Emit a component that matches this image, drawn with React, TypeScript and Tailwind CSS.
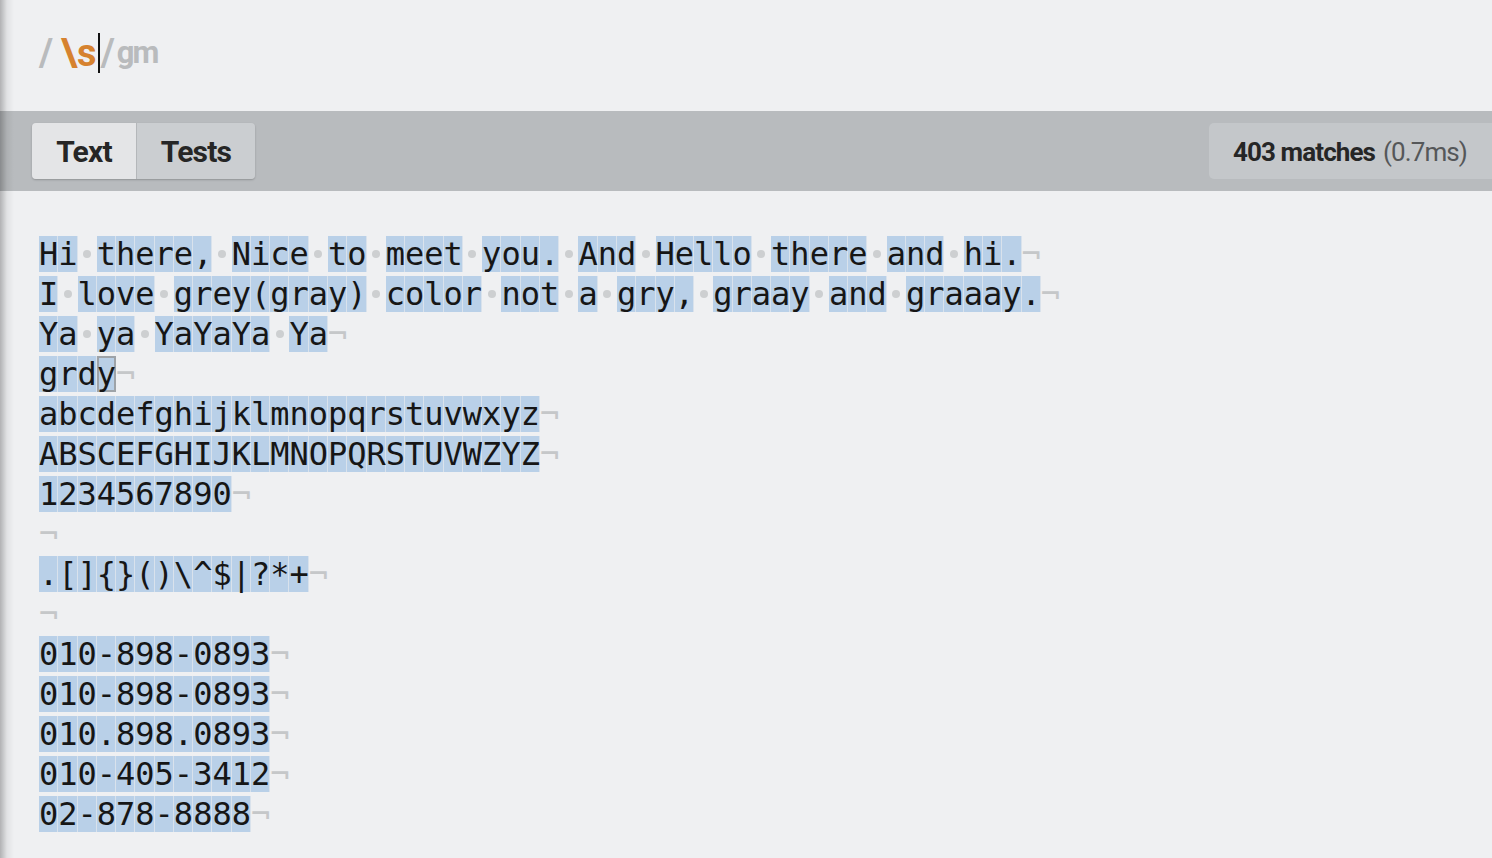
const LINES = [
  "Hi there, Nice to meet you. And Hello there and hi.",
  "I love grey(gray) color not a gry, graay and graaay.",
  "Ya ya YaYaYa Ya",
  "grdy",
  "abcdefghijklmnopqrstuvwxyz",
  "ABSCEFGHIJKLMNOPQRSTUVWZYZ",
  "1234567890",
  "",
  ".[]{}()\\^$|?*+",
  "",
  "010-898-0893",
  "010-898-0893",
  "010.898.0893",
  "010-405-3412",
  "02-878-8888",
];

function Line({ text, row }: { text: string; row: number }) {
  return (
    <div className="flex h-10 items-center">
      {text.split("").map((ch, i) =>
        ch === " " ? (
          <span key={i} className="flex h-9 w-[1ch] items-center justify-center">
            <span className="h-[8px] w-[8px] rounded-full bg-[#cdcfd1]" />
          </span>
        ) : (
          <span
            key={i}
            className={
              row === 3 && i === 3
                ? "h-9 bg-[#b9cfe6] leading-9 shadow-[inset_0_0_0_2px_#9ea3a8]"
                : "h-9 bg-[#b9d0e8] leading-9 shadow-[inset_-1px_0_0_#d9e2ec]"
            }
          >
            {ch}
          </span>
        )
      )}
      <span className="h-9 leading-9 text-[#c5c7c9]">¬</span>
    </div>
  );
}

export default function App() {
  return (
    <div className="relative h-[858px] w-full overflow-hidden bg-[#eff0f2] font-['Roboto',sans-serif]">
      <div className="flex h-[111px] items-center pb-[6px] pl-[39px] text-[38px] font-bold leading-none">
        <span className="text-[#b9bbbd]">/</span>
        <span className="ml-[8px] text-[#d6822f]">\s</span>
        <span className="mx-[1px] inline-block h-10 w-[2px] bg-[#111]" />
        <span className="text-[#b9bbbd]">/</span>
        <span className="ml-[2px] text-[31px] tracking-[-2px] text-[#b9bbbd]">gm</span>
      </div>

      <div className="flex h-20 items-center bg-[#b8bbbe] pl-8">
        <div className="flex h-14 rounded-[4px] shadow-[0_1px_2px_rgba(0,0,0,0.22)]">
          <div className="flex w-[104px] items-center justify-center rounded-l-[4px] bg-[#e4e5e7] text-[30px] font-bold tracking-[-0.8px] text-[#262626]">
            Text
          </div>
          <div className="w-px bg-[#b4b7ba]" />
          <div className="flex w-[118px] items-center justify-center rounded-r-[4px] bg-[#cbced1] text-[30px] font-bold tracking-[-0.8px] text-[#262626]">
            Tests
          </div>
        </div>
        <div className="ml-auto flex h-14 items-center rounded-l-[5px] bg-[#c4c7ca] pl-6 pr-[25px] pt-[2px] text-[26px] tracking-[-0.9px]">
          <span className="font-bold text-[#262626]">403 matches</span>
          <span className="ml-[8px] text-[#555759]">(0.7ms)</span>
        </div>
      </div>

      <div className="pl-[39px] pt-[43px] font-['DejaVu_Sans_Mono',monospace] text-[32px] text-[#161616]">
        {LINES.map((l, i) => (
          <Line key={i} text={l} row={i} />
        ))}
      </div>

      <div className="pointer-events-none absolute inset-y-0 left-0 w-[14px] bg-linear-to-r from-[rgba(0,0,0,0.26)] via-[rgba(0,0,0,0.06)] to-transparent" />
    </div>
  );
}
